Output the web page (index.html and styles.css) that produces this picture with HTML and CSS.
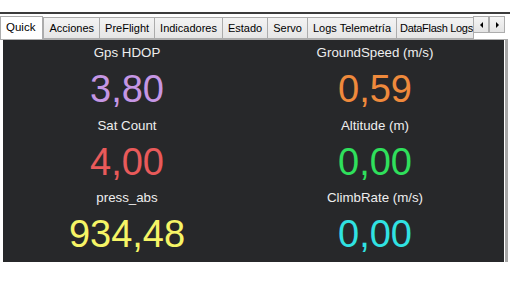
FILE: index.html
```html
<!DOCTYPE html>
<html lang="es">
<head>
    <meta charset="UTF-8">
    <title>Quick</title>
    <link rel="stylesheet" href="styles.css">
</head>
<body>
    <div class="window">
        <div class="tabstrip">
            <div class="tabs">
                <div class="tab active">Quick</div>
                <div class="tab">Acciones</div>
                <div class="tab">PreFlight</div>
                <div class="tab">Indicadores</div>
                <div class="tab">Estado</div>
                <div class="tab">Servo</div>
                <div class="tab">Logs Telemetría</div>
                <div class="tab last">DataFlash Logs</div>
            </div>
            <div class="scroller">
                <span class="scroll-btn"><span class="arrow left"></span></span>
                <span class="scroll-btn"><span class="arrow right"></span></span>
            </div>
        </div>
        <div class="frame">
            <div class="page">
                <div class="cell">
                    <div class="label">Gps HDOP</div>
                    <div class="value purple">3,80</div>
                </div>
                <div class="cell">
                    <div class="label">GroundSpeed (m/s)</div>
                    <div class="value orange">0,59</div>
                </div>
                <div class="cell">
                    <div class="label">Sat Count</div>
                    <div class="value red">4,00</div>
                </div>
                <div class="cell">
                    <div class="label">Altitude (m)</div>
                    <div class="value green">0,00</div>
                </div>
                <div class="cell">
                    <div class="label">press_abs</div>
                    <div class="value yellow">934,48</div>
                </div>
                <div class="cell">
                    <div class="label">ClimbRate (m/s)</div>
                    <div class="value cyan">0,00</div>
                </div>
            </div>
        </div>
    </div>
</body>
</html>
```
FILE: styles.css
```css
body {
    margin: 0;
    background: #fff;
    font-family: "Liberation Sans", Arial, sans-serif;
}
.window {
    margin-top: 12px;
    border-top: 2px solid #3c3c3c;
    width: 510px;
}
.tabstrip {
    display: flex;
    align-items: flex-end;
    height: 25px;
    width: 505px;
    position: relative;
}
.tabs {
    display: flex;
    align-items: flex-end;
    width: 474px;
    overflow: hidden;
    height: 25px;
}
.tab {
    flex: none;
    box-sizing: border-box;
    height: 22px;
    line-height: 20px;
    padding: 0 5px;
    margin-left: -1px;
    border: 1px solid #acacac;
    background: linear-gradient(#f3f3f3, #e6e6e6);
    font-size: 11px;
    color: #000;
}
.tab:first-child {
    margin-left: 0;
}
.tab.last {
    padding: 0 0 0 3px;
    letter-spacing: -0.3px;
}
.tab.active {
    height: 24px;
    padding: 0 7px 0 5px;
    margin-right: 1px;
    background: #fff;
    border-bottom: none;
    font-size: 11.5px;
    line-height: 20px;
    position: relative;
    z-index: 1;
    margin-bottom: -1px;
}
.scroller {
    display: flex;
    position: absolute;
    right: 0;
    top: 2px;
}
.scroll-btn {
    box-sizing: border-box;
    width: 16px;
    height: 17px;
    border: 1px solid #adadad;
    background: linear-gradient(#f5f5f5, #e4e4e4);
    display: flex;
    align-items: center;
    justify-content: center;
}
.arrow {
    width: 0;
    height: 0;
    border-top: 3px solid transparent;
    border-bottom: 3px solid transparent;
}
.arrow.left {
    border-right: 3px solid #000;
}
.arrow.right {
    border-left: 3px solid #000;
}
.frame {
    box-sizing: border-box;
    width: 508px;
    padding-left: 2px;
    padding-right: 1px;
    border-top: 1px solid #acacac;
    border-right: 3px solid #a8a8a8;
}
.page {
    box-sizing: border-box;
    margin-left: 1px;
    height: 222px;
    background: #27282a;
    display: grid;
    grid-template-columns: 1fr 1fr;
    grid-auto-rows: 72.5px;
    padding-right: 5px;
    text-align: center;
}
.cell {
    padding-top: 5px;
}
.label {
    font-size: 13.3px;
    line-height: 16px;
    color: #eeeeee;
}
.value {
    font-size: 38px;
    line-height: 40px;
    margin-top: 8px;
}
.purple { color: #c596e4; }
.orange { color: #ef8a3c; }
.red { color: #e95a5a; }
.green { color: #2fe05c; }
.yellow { color: #f6f566; }
.cyan { color: #30e2e2; }
```
